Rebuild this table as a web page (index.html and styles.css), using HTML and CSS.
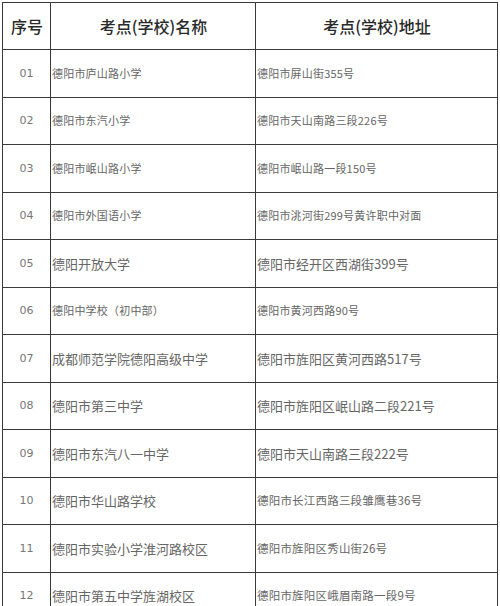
FILE: index.html
```html
<!DOCTYPE html>
<html lang="zh-CN">
<head>
<meta charset="utf-8">
<title>考点(学校)</title>
<link rel="stylesheet" href="styles.css">
</head>
<body>
<table class="sites">
  <colgroup>
    <col class="c-no">
    <col class="c-name">
    <col class="c-addr">
  </colgroup>
  <thead>
    <tr>
      <th>序号</th>
      <th>考点(学校)名称</th>
      <th>考点(学校)地址</th>
    </tr>
  </thead>
  <tbody>
    <tr><td class="no">01</td><td class="sm">德阳市庐山路小学</td><td class="sm">德阳市屏山街355号</td></tr>
    <tr><td class="no">02</td><td class="sm">德阳市东汽小学</td><td class="sm">德阳市天山南路三段226号</td></tr>
    <tr><td class="no">03</td><td class="sm">德阳市岷山路小学</td><td class="sm">德阳市岷山路一段150号</td></tr>
    <tr><td class="no">04</td><td class="sm">德阳市外国语小学</td><td class="sm">德阳市洮河街299号黄许职中对面</td></tr>
    <tr><td class="no">05</td><td class="lg">德阳开放大学</td><td class="lg">德阳市经开区西湖街399号</td></tr>
    <tr><td class="no">06</td><td class="sm">德阳中学校（初中部）</td><td class="sm">德阳市黄河西路90号</td></tr>
    <tr><td class="no">07</td><td class="lg">成都师范学院德阳高级中学</td><td class="lg">德阳市旌阳区黄河西路517号</td></tr>
    <tr><td class="no">08</td><td class="lg">德阳市第三中学</td><td class="lg">德阳市旌阳区岷山路二段221号</td></tr>
    <tr><td class="no">09</td><td class="lg">德阳市东汽八一中学</td><td class="lg">德阳市天山南路三段222号</td></tr>
    <tr><td class="no">10</td><td class="lg">德阳市华山路学校</td><td class="md">德阳市长江西路三段雏鹰巷36号</td></tr>
    <tr><td class="no">11</td><td class="lg">德阳市实验小学淮河路校区</td><td class="md">德阳市旌阳区秀山街26号</td></tr>
    <tr><td class="no">12</td><td class="lg">德阳市第五中学旌湖校区</td><td class="md">德阳市旌阳区峨眉南路一段9号</td></tr>
  </tbody>
</table>
</body>
</html>
```
FILE: styles.css
```css
html, body {
  margin: 0;
  padding: 0;
  background: #ffffff;
}

body {
  padding: 2px 0 0 2px;
  font-family: "Noto Sans CJK SC", "Liberation Sans", sans-serif;
  color: #666;
}

.sites {
  border-collapse: collapse;
  table-layout: fixed;
  width: 495px;
}

.c-no { width: 48px; }
.c-name { width: 205px; }
.c-addr { width: 242px; }

.sites th,
.sites td {
  border: 1px solid #3a3a3a;
  padding: 0 0 0 1px;
  vertical-align: middle;
  text-align: left;
  white-space: nowrap;
  overflow: hidden;
}

.sites th {
  height: 46px;
  font-size: 16px;
  font-weight: 500;
  color: #2a2a2a;
  text-align: center;
}

.sites td {
  height: 46.5px;
  line-height: 1;
}

.sites td.no {
  text-align: center;
  font-family: "DejaVu Sans", "Liberation Sans", sans-serif;
  font-size: 11px;
  color: #777;
  padding: 0;
}

.sites td.sm {
  font-size: 11px;
  letter-spacing: 0.2px;
}

.sites td.md {
  font-size: 11.5px;
  letter-spacing: 0.2px;
}

.sites td.lg {
  font-size: 13px;
}
```
